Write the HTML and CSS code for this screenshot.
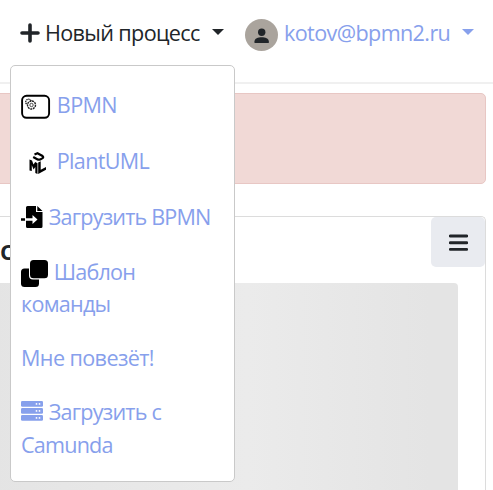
FILE: index.html
```html
<!DOCTYPE html>
<html lang="ru">
<head>
<meta charset="utf-8">
<title>BPMN2</title>
<link rel="stylesheet" href="styles.css">
</head>
<body>
<header class="navbar">
  <div class="create">
    <svg class="plus" viewBox="0 0 20 20"><path d="M10 2v16M2 10h16" stroke="currentColor" stroke-width="3.6" stroke-linecap="round"/></svg>
    <span class="create-label">Новый процесс</span>
    <i class="caret"></i>
    <nav class="menu">
      <a class="item tall">
        <svg class="ic-task" viewBox="0 0 30 26"><rect x="1.1" y="1.8" width="27" height="22" rx="4.5" fill="none" stroke="#000" stroke-width="1.9"/><g fill="none" stroke="#222"><circle cx="7.500" cy="8" r="2.800" stroke-width="1.300" stroke-dasharray="1.500 .6"/><circle cx="10.500" cy="11" r="4" fill="#fff" stroke-width="1.400" stroke-dasharray="2 .7"/><circle cx="10.500" cy="11" r="1.700" stroke-width=".8"/></g></svg>
        <span class="t-bpmn">BPMN</span>
      </a>
      <a class="item tall">
        <svg class="ic-uml" viewBox="0 0 30 26"><path d="M8.500 20.500V9.500l2.500 1 1.500 4 1.700-2.500 2.300 1.200V24l-2.200-1v-6l-1.700 2.500-1.800-4.200v5.800zM17.200 12.500l2.500-1.300v8.500l5.300-2.600v2.600L17.200 24z"/><path d="M13.500 4.500l3-1.300 5 2.800q1.500 1.300-.3 2.400l-2 1q-1.500.6-3-.2l-4-2.200" fill="none" stroke="#000" stroke-width="2.200"/></svg>
        <span class="t-plant">PlantUML</span>
      </a>
      <a class="item">
        <svg class="ic-file" viewBox="0 0 22 22"><path d="M6.500 0H15v6h6.500v14.500q0 1.500-1.500 1.500H6.500Q5 22 5 20.500V1.500Q5 0 6.500 0z"/><path d="M16.300 0l5.200 5h-5.200zM0 12.200h4v2.600H0z"/><path d="M5 12.300h6.500V9l5 4.500-5 4.500v-3.300H5z" fill="#fff"/></svg>
        <span class="t-load">Загрузить BPMN</span>
      </a>
      <a class="item">
        <svg class="ic-clone" viewBox="0 0 27 27"><rect x="0" y="8.500" width="18" height="18.500" rx="3.500"/><rect x="8" y="-1" width="20" height="20.500" rx="4" fill="#fff"/><rect x="9" y="0" width="18" height="18.300" rx="3.500"/></svg>
        <span class="t-template">Шаблон</span><br><span class="t-team">команды</span>
      </a>
      <a class="item"><span class="t-lucky">Мне повезёт!</span></a>
      <a class="item">
        <svg class="ic-server" viewBox="0 0 22 20"><g fill="currentColor"><rect y="0" width="22" height="5.700" rx="1.300"/><rect y="7" width="22" height="5.700" rx="1.300"/><rect y="14" width="22" height="5.700" rx="1.300"/></g><g fill="#fff"><circle cx="15.500" cy="2.900" r=".9"/><circle cx="18.500" cy="2.900" r=".9"/><circle cx="15.500" cy="9.900" r=".9"/><circle cx="18.500" cy="9.900" r=".9"/><circle cx="15.500" cy="16.900" r=".9"/><circle cx="18.500" cy="16.900" r=".9"/></g></svg>
        <span class="t-from">Загрузить с</span><br><span class="t-camunda">Camunda</span>
      </a>
    </nav>
  </div>
  <div class="account">
    <svg class="avatar" viewBox="0 0 33 32"><ellipse cx="16.500" cy="16" rx="16.500" ry="16" fill="#aaa49d"/><circle cx="16.700" cy="13.300" r="3.700" fill="#212529"/><path d="M9.500 24v-1.700c0-5.500 14.300-5.500 14.300 0V24z" fill="#212529"/></svg>
    <span class="email">kotov@bpmn2.ru</span>
    <i class="caret"></i>
  </div>
</header>
<div class="alert"></div>
<section class="card">
  <div class="card-head">
    <h2>С</h2>
    <button class="toggle" aria-label="Меню"><svg viewBox="0 0 19 17"><path d="M1.200 2h16.600M1.200 8.700h16.600M1.200 15.400h16.600" stroke="#212529" stroke-width="2.900" stroke-linecap="round"/></svg></button>
  </div>
  <div class="placeholder"></div>
</section>
</body>
</html>
```
FILE: styles.css
```css
* { box-sizing: border-box; }
body {
  display: flex;
  flex-direction: column;
  margin: 0;
  height: 490px;
  overflow: hidden;
  background: #fff;
  color: #212529;
  font-family: "Segoe UI", "Open Sans", "Noto Sans", sans-serif;
  font-size: 21.6px;
  line-height: 32.4px;
}
.navbar {
  display: flex;
  flex: none;
  height: 84px;
  padding: 17px 0 0 20px;
  border-bottom: 2px solid #f0f0f0;
}
.create, .account { display: flex; align-items: center; height: 33px; white-space: nowrap; }
.create { position: relative; width: 225px; }
.plus { width: 20px; height: 20px; margin: -2px 5px 0 0; }
.create-label { width: 155px; letter-spacing: -0.65px; }
.caret {
  border: 6px solid transparent;
  border-top-color: currentColor;
  border-bottom: 0;
  margin: -3px 0 0 12px;
}
.account { color: #87a0ec; }
.avatar { width: 33px; height: 32px; margin: 3px 6px 0 0; }
.email { width: 166px; letter-spacing: -0.62px; }
.menu {
  position: absolute;
  left: -10px;
  top: 48px;
  z-index: 2;
  width: 225px;
  height: 417px;
  padding: 23px 10px 0;
  background: #fff;
  border: 1px solid #c9c9c9;
  border-radius: 5px;
}
.item { display: block; color: #87a0ec; margin-bottom: 21.8px; letter-spacing: -0.6px; }
.item svg { margin-right: 0.8px; }
.tall { height: 34.4px; }
.ic-task, .ic-uml { width: 30px; height: 26px; vertical-align: -7px; }
.ic-file { width: 22px; height: 22px; vertical-align: -3px; }
.ic-clone { width: 27px; height: 27px; vertical-align: -7px; }
.ic-server { width: 22px; height: 20px; vertical-align: -1px; }
.t-plant { letter-spacing: -0.7px; }
.t-load { letter-spacing: -0.82px; }
.t-template { letter-spacing: -0.8px; }
.t-team { letter-spacing: -0.75px; }
.t-from { letter-spacing: -0.8px; }
.t-camunda { letter-spacing: -0.8px; }
.alert {
  flex: none;
  height: 91px;
  margin: 9px 7px 0 -10px;
  background: #f1d9d6;
  border: 1px solid #e8c7c4;
  border-radius: 5px;
}
.card {
  display: flex;
  flex: 1;
  flex-direction: column;
  margin: 32px 7px 0 -10px;
  border: 1px solid #dcdcdc;
  border-bottom: 0;
  border-radius: 5px 5px 0 0;
}
.card-head { display: flex; justify-content: space-between; height: 66px; padding-left: 9px; }
.card-head h2 { margin: 18px 0 0; font-size: 22px; line-height: 32px; font-weight: 700; }
.toggle {
  display: flex;
  align-items: center;
  justify-content: center;
  width: 54px;
  height: 50px;
  padding: 1px 0 0;
  border: 0;
  border-radius: 5px;
  background: #e9ebf0;
}
.toggle svg { width: 19px; height: 17px; }
.placeholder {
  flex: 1;
  margin-right: 27px;
  border-radius: 4px 4px 0 0;
  background: linear-gradient(90deg, #e4e4e4 0, #ebebeb 55%, #e4e4e4 94%);
}
```
